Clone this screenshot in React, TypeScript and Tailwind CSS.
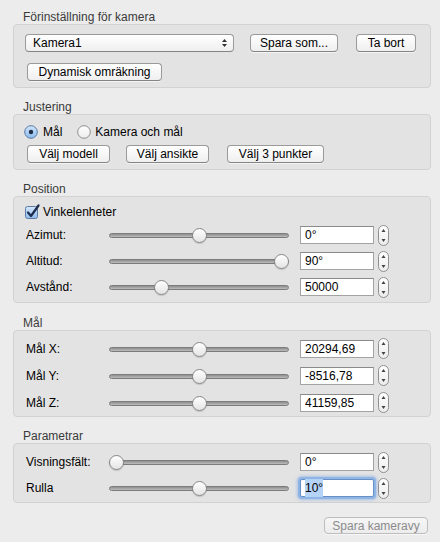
import React from "react";

const font = { fontFamily: '"Liberation Sans", Arial, sans-serif' };

function Button({
  label,
  w,
  disabled,
  h = "h-[18px]",
}: {
  label: string;
  w: string;
  disabled?: boolean;
  h?: string;
}) {
  return (
    <div
      className={`${w} ${h} flex items-center justify-center rounded-[4px] border text-[12px] leading-none shadow-[0_1px_0_rgba(255,255,255,0.6)] ${
        disabled
          ? "border-[#bdbdbd] bg-gradient-to-b from-[#f6f6f6] to-[#ececec] text-[#8c8c8c]"
          : "border-[#9a9a9a] border-b-[#848484] bg-gradient-to-b from-white to-[#efefef] text-black"
      }`}
    >
      {label}
    </div>
  );
}

function Stepper() {
  return (
    <svg width="11" height="21" viewBox="0 0 11 21" className="ml-[4px] shrink-0">
      <defs>
        <linearGradient id="stg" x1="0" y1="0" x2="0" y2="1">
          <stop offset="0" stopColor="#ffffff" />
          <stop offset="1" stopColor="#ececec" />
        </linearGradient>
      </defs>
      <rect x="0.5" y="0.5" width="10" height="20" rx="5" fill="url(#stg)" stroke="#8f8f8f" />
      <path d="M3.5 7 L5.5 4 L7.5 7 Z" fill="#444" />
      <path d="M3.5 14 L5.5 17 L7.5 14 Z" fill="#444" />
    </svg>
  );
}

function Slider({ f }: { f: number }) {
  const left = 7.5 + f * 165 - 7.5;
  return (
    <div className="relative w-[180px] h-[16px] shrink-0">
      <div className="absolute left-0 right-0 top-[6px] h-[5px] rounded-full border border-[#7c7c7c] bg-gradient-to-b from-[#8e8e8e] to-[#bdbdbd]" />
      <div
        className="absolute top-[1px] h-[15px] w-[15px] rounded-full border border-[#878787] bg-gradient-to-b from-white to-[#e4e4e4] shadow-[0_1px_1px_rgba(0,0,0,0.15)]"
        style={{ left }}
      />
    </div>
  );
}

function Field({ value, focused }: { value: string; focused?: boolean }) {
  return (
    <div
      className={`w-[74px] h-[18px] shrink-0 flex items-center bg-white pl-[4px] text-[12px] text-black border ${
        focused
          ? "border-[#6a8fc4] shadow-[0_0_0_2px_#8fb4e6,0_0_3px_3px_rgba(110,160,225,0.5)] rounded-[2px]"
          : "border-[#a3a3a3] border-t-[#8a8a8a]"
      }`}
    >
      {focused ? <span className="bg-[#b5d2f7]">{value}</span> : value}
    </div>
  );
}

function Row({ label, f, value, h, focused }: { label: string; f: number; value: string; h: string; focused?: boolean }) {
  return (
    <div className={`${h} flex items-center pl-[12px]`}>
      <div className="w-[83px] shrink-0 text-[12px] text-black">{label}</div>
      <Slider f={f} />
      <div className="ml-[11px] flex items-center">
        <Field value={value} focused={focused} />
        <Stepper />
      </div>
    </div>
  );
}

function Group({ title, children, cls }: { title: string; children: React.ReactNode; cls: string }) {
  return (
    <div>
      <div className="h-[14px] leading-[14px] pl-[10px] text-[12px] text-[#3a3a3a]">{title}</div>
      <div className={`rounded-[4px] border border-[#d2d2d2] bg-[#e3e3e3] ${cls}`}>{children}</div>
    </div>
  );
}

function Radio({ on }: { on?: boolean }) {
  return (
    <svg width="14" height="14" viewBox="0 0 14 14" className="shrink-0">
      <defs>
        <linearGradient id={on ? "ron" : "roff"} x1="0" y1="0" x2="0" y2="1">
          <stop offset="0" stopColor={on ? "#d2e6fa" : "#ffffff"} />
          <stop offset="1" stopColor={on ? "#8bbbed" : "#ececec"} />
        </linearGradient>
      </defs>
      <circle cx="7" cy="7" r="6.3" fill={`url(#${on ? "ron" : "roff"})`} stroke={on ? "#5a79a6" : "#8e8e8e"} />
      {on && <circle cx="7" cy="7" r="2.2" fill="#1e2c44" />}
    </svg>
  );
}

function Checkbox() {
  return (
    <svg width="15" height="15" viewBox="0 0 15 15" className="shrink-0">
      <defs>
        <linearGradient id="cbg" x1="0" y1="0" x2="0" y2="1">
          <stop offset="0" stopColor="#d6e8fb" />
          <stop offset="1" stopColor="#8fbcec" />
        </linearGradient>
      </defs>
      <rect x="0.5" y="2.5" width="12" height="12" rx="2" fill="url(#cbg)" stroke="#5c7aa6" />
      <path d="M3 8.5 L6 12 L13.5 1.5" fill="none" stroke="#1b2c4f" strokeWidth="2.2" strokeLinecap="round" strokeLinejoin="round" />
    </svg>
  );
}

export default function App() {
  return (
    <div style={font} className="w-[440px] h-[542px] bg-[#ececec] pl-[13px] pr-[9px] pt-[10px] overflow-hidden">
      <Group title="Förinställning för kamera" cls="h-[64px] pt-[9px]">
        <div className="flex items-center pl-[11px]">
          <div className="w-[209px] h-[18px] flex items-center justify-between rounded-[4px] border border-[#9a9a9a] border-b-[#848484] bg-gradient-to-b from-white to-[#efefef] pl-[7px] pr-[5px] text-[12px]">
            <span>Kamera1</span>
            <svg width="7" height="10" viewBox="0 0 7 10">
              <path d="M1 4 L3.5 1 L6 4 Z" fill="#333" />
              <path d="M1 6 L3.5 9 L6 6 Z" fill="#333" />
            </svg>
          </div>
          <div className="ml-[16px]">
            <Button label="Spara som..." w="w-[88px]" />
          </div>
          <div className="ml-[18px]">
            <Button label="Ta bort" w="w-[60px]" />
          </div>
        </div>
        <div className="pl-[13px] mt-[11px]">
          <Button label="Dynamisk omräkning" w="w-[135px]" />
        </div>
      </Group>

      <div className="h-[12px]" />
      <Group title="Justering" cls="h-[56px] pt-[9px]">
        <div className="flex items-center pl-[10px] h-[16px] text-[12px]">
          <Radio on />
          <span className="ml-[5px]">Mål</span>
          <span className="ml-[15px]">
            <Radio />
          </span>
          <span className="ml-[4px]">Kamera och mål</span>
        </div>
        <div className="flex items-center pl-[13px] mt-[5px]">
          <Button label="Välj modell" w="w-[83px]" />
          <div className="ml-[16px]">
            <Button label="Välj ansikte" w="w-[83px]" />
          </div>
          <div className="ml-[18px]">
            <Button label="Välj 3 punkter" w="w-[97px]" />
          </div>
        </div>
      </Group>

      <div className="h-[12px]" />
      <Group title="Position" cls="h-[107px] pt-[4px]">
        <div className="h-[21px] flex items-center pl-[11px] text-[12px]">
          <Checkbox />
          <span className="ml-[3px]">Vinkelenheter</span>
        </div>
        <Row label="Azimut:" f={0.5} value="0°" h="h-[26px]" />
        <Row label="Altitud:" f={1} value="90°" h="h-[26px]" />
        <Row label="Avstånd:" f={0.27} value="50000" h="h-[26px]" />
      </Group>

      <div className="h-[13px]" />
      <Group title="Mål" cls="h-[87px] pt-[4px]">
        <Row label="Mål X:" f={0.5} value="20294,69" h="h-[27px]" />
        <Row label="Mål Y:" f={0.5} value="-8516,78" h="h-[27px]" />
        <Row label="Mål Z:" f={0.5} value="41159,85" h="h-[27px]" />
      </Group>

      <div className="h-[12px]" />
      <Group title="Parametrar" cls="h-[60px] pt-[5px]">
        <Row label="Visningsfält:" f={0} value="0°" h="h-[26px]" />
        <Row label="Rulla" f={0.5} value="10°" h="h-[26px]" focused />
      </Group>

      <div className="flex justify-end pr-[3px] mt-[14px]">
        <Button label="Spara kameravy" w="w-[104px]" h="h-[17px]" disabled />
      </div>
    </div>
  );
}
